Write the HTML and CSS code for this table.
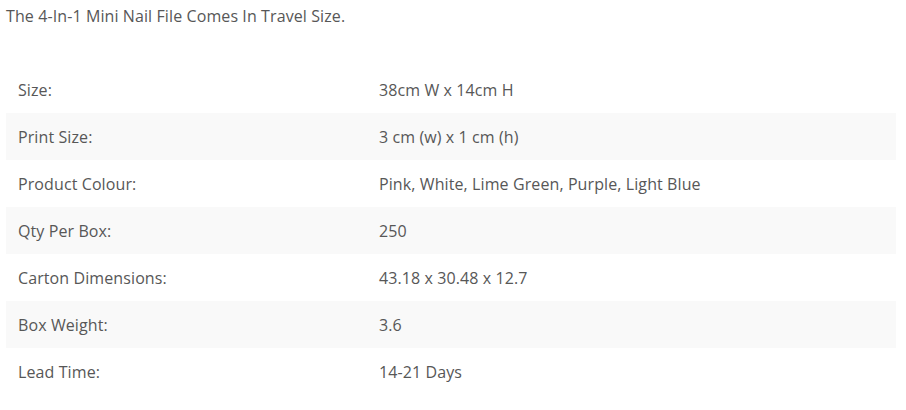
FILE: index.html
```html
<!DOCTYPE html>
<html lang="en">
<head>
<meta charset="utf-8">
<title>Product details</title>
<link rel="stylesheet" href="styles.css">
</head>
<body>
<div class="page">
  <p class="intro">The 4-In-1 Mini Nail File Comes In Travel Size.</p>
  <table class="specs">
    <tbody>
      <tr><td class="label">Size:</td><td class="value">38cm W x 14cm H</td></tr>
      <tr><td class="label">Print Size:</td><td class="value">3 cm (w) x 1 cm (h)</td></tr>
      <tr><td class="label">Product Colour:</td><td class="value">Pink, White, Lime Green, Purple, Light Blue</td></tr>
      <tr><td class="label">Qty Per Box:</td><td class="value">250</td></tr>
      <tr><td class="label">Carton Dimensions:</td><td class="value">43.18 x 30.48 x 12.7</td></tr>
      <tr><td class="label">Box Weight:</td><td class="value">3.6</td></tr>
      <tr><td class="label">Lead Time:</td><td class="value">14-21 Days</td></tr>
    </tbody>
  </table>
</div>
</body>
</html>
```
FILE: styles.css
```css
html, body {
  margin: 0;
  padding: 0;
  background: #ffffff;
}
.page {
  padding: 0 10px 0 6px;
  font-family: "Open Sans", "Liberation Sans", sans-serif;
  font-size: 16px;
  line-height: 24px;
  letter-spacing: 0.1px;
  color: #575757;
}
.intro {
  margin: 4px 0 38px;
}
.specs {
  width: 890px;
  border-collapse: collapse;
  border-spacing: 0;
}
.specs td {
  height: 47px;
  padding: 0 12px;
  box-sizing: border-box;
  vertical-align: middle;
}
.specs .label {
  width: 361px;
}
.specs tr:nth-child(even) td {
  background: #f9f9f9;
}
```
